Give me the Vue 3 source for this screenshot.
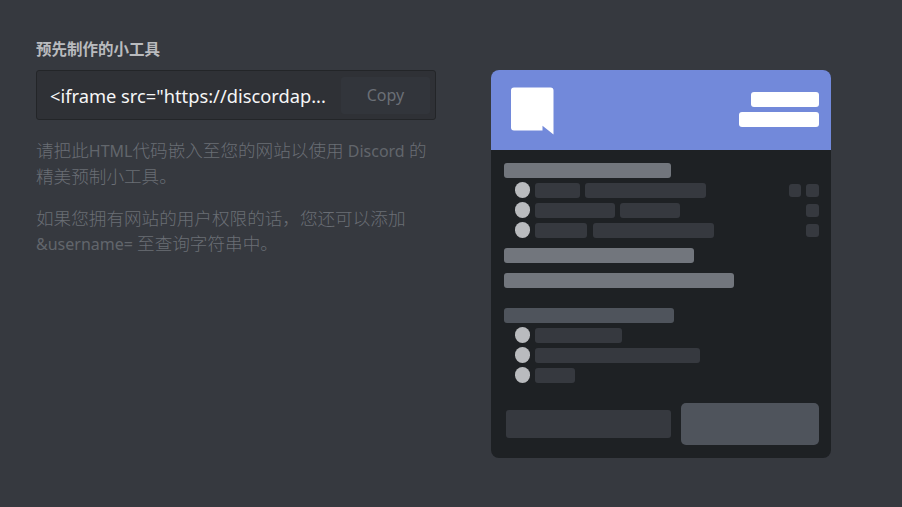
<script setup>
const groupOne = [
  { pills: [45, 121], gap: 5, actions: [12.5, 12.5] },
  { pills: [80, 60], gap: 5, actions: [12.5] },
  { pills: [52.5, 120.5], gap: 6, actions: [12.5] }
]
const groupTwo = [87, 165, 40]
</script>

<template>
  <main class="page">
    <section class="intro">
      <h2 class="title">预先制作的小工具</h2>
      <div class="code-box">
        <span class="code">&lt;iframe src="https://discordap...</span>
        <button class="copy" type="button">Copy</button>
      </div>
      <p class="note">请把此<span class="latin">HTML</span>代码嵌入至您的网站以使用<span class="latin"> Discord </span>的<br />精美预制小工具。</p>
      <p class="note second">如果您拥有网站的用户权限的话，您还可以添加<br /><span class="latin">&amp;username= </span>至查询字符串中。</p>
    </section>

    <section class="widget">
      <header class="widget-head">
        <svg class="logo" viewBox="0 0 43 48" width="43" height="48" aria-hidden="true">
          <path d="M3 0.5H39.5Q42.5 0.5 42.5 3.5V47.5L31.5 38.7V43.5H3Q0 43.5 0 40.5V3.5Q0 0.5 3 0.5Z" fill="#fff" />
        </svg>
        <div class="head-bars">
          <span class="head-bar short"></span>
          <span class="head-bar long"></span>
        </div>
      </header>

      <div class="widget-body">
        <span class="bar" style="width: 167.5px"></span>
        <div v-for="(row, i) in groupOne" :key="i" class="member">
          <span class="dot"></span>
          <div class="pills" :style="{ gap: row.gap + 'px' }">
            <span v-for="(w, j) in row.pills" :key="j" class="pill" :style="{ width: w + 'px' }"></span>
          </div>
          <div class="actions">
            <span v-for="(w, j) in row.actions" :key="j" class="pill action"></span>
          </div>
        </div>

        <span class="bar gap-top" style="width: 190px"></span>
        <span class="bar gap-top" style="width: 230px"></span>

        <span class="bar dim section" style="width: 170.5px"></span>
        <div v-for="(w, i) in groupTwo" :key="'m' + i" class="member">
          <span class="dot"></span>
          <span class="pill" :style="{ width: w + 'px' }"></span>
        </div>

        <footer class="widget-foot">
          <span class="field"></span>
          <span class="cta"></span>
        </footer>
      </div>
    </section>
  </main>
</template>

<style scoped>
.page {
  display: flex;
  align-items: flex-start;
  box-sizing: border-box;
  width: 902px;
  height: 507px;
  padding: 39px 0 0 36px;
  background: #36393f;
  font-family: "Noto Sans", "Noto Sans CJK SC", sans-serif;
}
.intro {
  width: 400px;
  flex: none;
}
.title {
  margin: 0 0 11px;
  font-size: 15.5px;
  line-height: 20px;
  font-weight: 700;
  color: #b9bbbe;
}
.code-box {
  display: flex;
  align-items: center;
  box-sizing: border-box;
  height: 50px;
  padding: 0 5px 0 13px;
  background: #2f3136;
  border: 1px solid #232528;
  border-radius: 3px;
}
.code {
  flex: 1;
  min-width: 0;
  white-space: nowrap;
  font-size: 18.3px;
  color: #f6f6f7;
}
.copy {
  flex: none;
  width: 89px;
  height: 37px;
  padding: 0;
  border: 0;
  border-radius: 3px;
  background: #32353b;
  color: #6b6f76;
  font: inherit;
  font-size: 16px;
}
.note {
  margin: 18px 0 0;
  font-size: 17.6px;
  font-weight: 300;
  line-height: 25px;
  color: #6a6e75;
}
.latin {
  font-size: 16px;
  font-weight: 400;
  color: #62666c;
}
.note.second {
  margin-top: 17px;
}
.widget {
  flex: none;
  width: 340px;
  height: 388px;
  margin: 31px 0 0 55px;
  border-radius: 8px;
  overflow: hidden;
  background: #1e2124;
  display: flex;
  flex-direction: column;
}
.widget-head {
  flex: none;
  display: flex;
  align-items: flex-start;
  justify-content: space-between;
  box-sizing: border-box;
  height: 80px;
  padding: 17px 12.5px 0 20px;
  background: #7289da;
}
.logo {
  display: block;
}
.head-bars {
  display: flex;
  flex-direction: column;
  align-items: flex-end;
  gap: 5px;
  padding-top: 5.3px;
}
.head-bar {
  display: block;
  height: 15px;
  border-radius: 3px;
  background: #fff;
}
.head-bar.short { width: 67.5px; }
.head-bar.long { width: 80px; }
.widget-body {
  flex: 1;
  display: flex;
  flex-direction: column;
  align-items: flex-start;
  box-sizing: border-box;
  padding: 12.5px 12.5px 12.7px;
}
.bar {
  display: block;
  flex: none;
  height: 15px;
  border-radius: 3px;
  background: #72767d;
}
.bar.gap-top { margin-top: 10px; }
.bar.dim { background: #4f545c; }
.bar.section { margin-top: 20px; }
.member {
  align-self: stretch;
  display: flex;
  align-items: center;
  height: 15px;
  margin-top: 5px;
  padding-left: 11.3px;
}
.dot {
  flex: none;
  width: 15.2px;
  height: 15.2px;
  margin-right: 5px;
  border-radius: 50%;
  background: #b9bbbe;
}
.pills {
  display: flex;
}
.pill {
  display: block;
  flex: none;
  height: 15px;
  border-radius: 3px;
  background: #36393f;
}
.actions {
  display: flex;
  gap: 5px;
  margin-left: auto;
}
.action {
  width: 12.5px;
  height: 13px;
}
.widget-foot {
  align-self: stretch;
  margin-top: auto;
  display: flex;
  align-items: center;
  justify-content: space-between;
  padding-left: 2.5px;
}
.field {
  display: block;
  width: 165px;
  height: 28px;
  border-radius: 3px;
  background: #36393f;
}
.cta {
  display: block;
  width: 137.5px;
  height: 42.3px;
  border-radius: 5px;
  background: #4f545c;
}
</style>

<style>
html, body {
  margin: 0;
  background: #36393f;
}
</style>
